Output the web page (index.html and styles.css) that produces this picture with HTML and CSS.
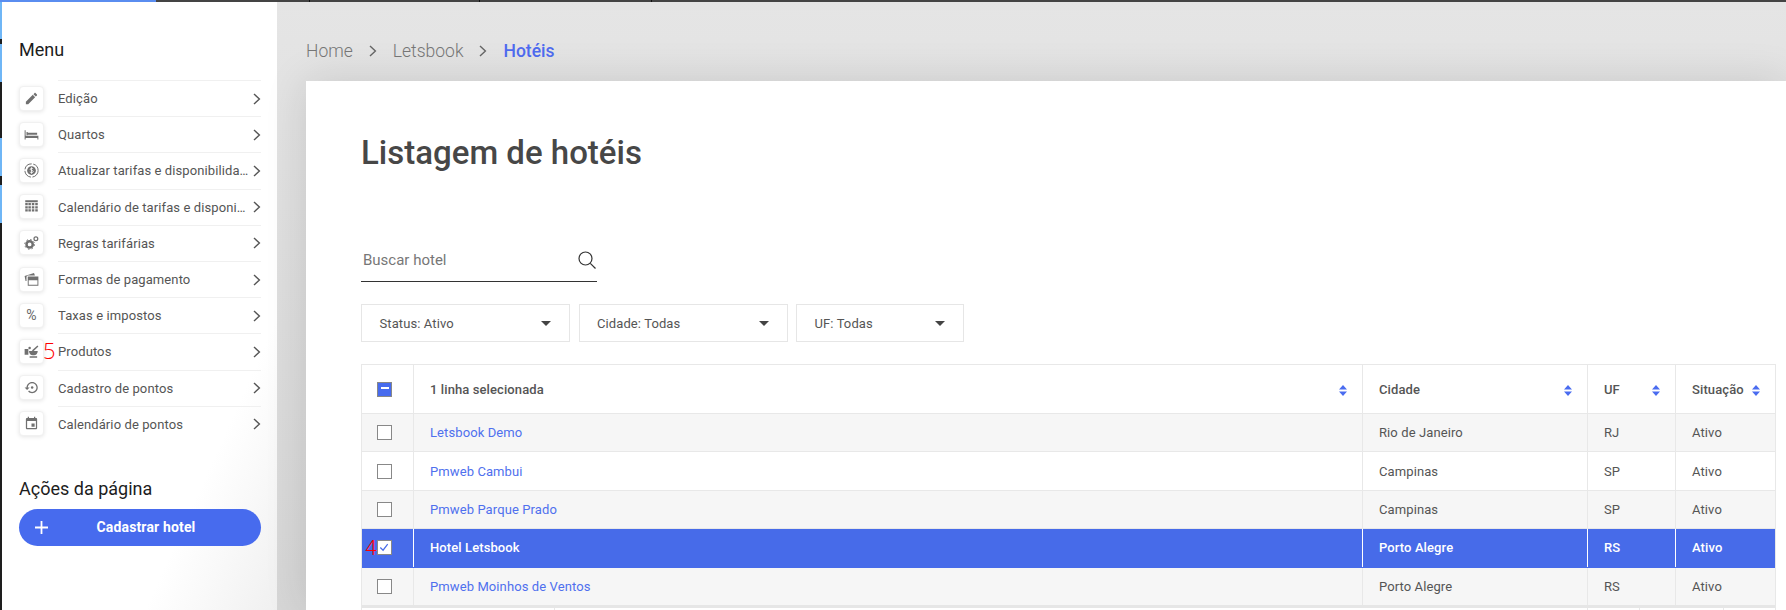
FILE: index.html
```html
<!DOCTYPE html>
<html lang="pt-BR">
<head>
<meta charset="utf-8">
<title>Listagem de hotéis</title>
<link rel="stylesheet" href="styles.css">
</head>
<body>
<svg class="sprites" width="0" height="0" aria-hidden="true">
  <symbol id="chev" viewBox="0 0 8 12"><path d="M1 1l5.4 5L1 11" fill="none" stroke="currentColor" stroke-width="1.4"/></symbol>
  <symbol id="sort" viewBox="0 0 8 11"><path d="M4 0l4 4.6H0zM4 11L0 6.4h8z" fill="#4a6cf0"/></symbol>
</svg>
<div class="topbar"><div class="topbar-progress"></div></div>
<div class="shell">
  <div class="strip"></div>
  <aside class="sidebar">
    <h2 class="side-title">Menu</h2>
    <ul class="menu">
      <li class="menu-item"><span class="ico"><svg viewBox="0 0 24 24"><path d="M3 17.25V21h3.75L17.81 9.94l-3.75-3.75L3 17.25zM20.71 7.04c.39-.39.39-1.02 0-1.41l-2.34-2.34c-.39-.39-1.02-.39-1.41 0l-1.83 1.83 3.75 3.75 1.83-1.83z"/></svg></span><span class="menu-row"><span class="menu-label">Edição</span><svg class="chev"><use href="#chev"/></svg></span></li>
      <li class="menu-item"><span class="ico"><svg viewBox="0 0 24 24"><path d="M1 5h1.600v9H23v6h-1.600v-2.600H2.600V20H1zM5 9h16v3.500H5z"/><path d="M4 8h2v5H4z"/></svg></span><span class="menu-row"><span class="menu-label">Quartos</span><svg class="chev"><use href="#chev"/></svg></span></li>
      <li class="menu-item"><span class="ico"><svg viewBox="0 0 24 24"><circle cx="12" cy="12" r="10.600" fill="none" stroke="#707070" stroke-width="1.600" stroke-dasharray="15 2.500"/><circle cx="12" cy="12" r="7"/><path d="M14.600 9.300c-.8-1-4.700-1.200-4.700.8 0 2 5 1.300 5 3.600 0 2-4.400 1.900-5.600.6M12 6.800v10.400" fill="none" stroke="#fff" stroke-width="1.300"/></svg></span><span class="menu-row"><span class="menu-label">Atualizar tarifas e disponibilida…</span><svg class="chev"><use href="#chev"/></svg></span></li>
      <li class="menu-item"><span class="ico"><svg viewBox="0 0 24 24"><path d="M2 2h20v3H2zM2 6.500h4v3.500H2zM7 6.500h4v3.500H7zM12.500 6.500h4v3.500h-4zM18 6.500h4v3.500h-4zM2 11.500h4V15H2zM7 11.500h4V15H7zM12.500 11.500h4V15h-4zM18 11.500h4V15h-4zM2 16.500h4V20H2zM7 16.500h4V20H7zM12.500 16.500h4V20h-4zM18 16.500h4V20h-4z"/></svg></span><span class="menu-row"><span class="menu-label">Calendário de tarifas e disponi…</span><svg class="chev"><use href="#chev"/></svg></span></li>
      <li class="menu-item"><span class="ico"><svg viewBox="0 0 24 24"><circle cx="9" cy="15" r="5" fill="none" stroke="#707070" stroke-width="4"/><circle cx="9" cy="15" r="7.800" fill="none" stroke="#707070" stroke-width="1.600" stroke-dasharray="2.500 3.625"/><circle cx="19" cy="6" r="3" fill="none" stroke="#707070" stroke-width="2"/></svg></span><span class="menu-row"><span class="menu-label">Regras tarifárias</span><svg class="chev"><use href="#chev"/></svg></span></li>
      <li class="menu-item"><span class="ico"><svg viewBox="0 0 24 24"><path d="M1 6.500L16 1.500l1.500 4H6.500A2.500 2.500 0 0 0 4 8v6.500H2.500z"/><path fill-rule="evenodd" d="M6 7h17v15H6zM7.500 13v7.500h14V13z"/></svg></span><span class="menu-row"><span class="menu-label">Formas de pagamento</span><svg class="chev"><use href="#chev"/></svg></span></li>
      <li class="menu-item"><span class="ico ico-text">%</span><span class="menu-row"><span class="menu-label">Taxas e impostos</span><svg class="chev"><use href="#chev"/></svg></span></li>
      <li class="menu-item"><span class="ico"><svg viewBox="0 0 24 24"><path d="M1 8h6v9H1zM8 11h14c0 4-3 7-6 7h-2c-3 0-6-3-6-7zM9 19.500h12V22H9z"/><path d="M12.500 10.500l9-8 1.500 1.500-8 7.500z"/><circle cx="9" cy="6.500" r="2"/></svg></span><span class="note note-five">5</span><span class="menu-row"><span class="menu-label">Produtos</span><svg class="chev"><use href="#chev"/></svg></span></li>
      <li class="menu-item"><span class="ico"><svg viewBox="0 0 24 24"><path d="M13 3c-4.970 0-9 4.030-9 9H1l3.890 3.890.07.140L9 12H6c0-3.870 3.130-7 7-7s7 3.130 7 7-3.130 7-7 7c-1.930 0-3.680-.790-4.940-2.060l-1.420 1.420C8.270 19.990 10.510 21 13 21c4.970 0 9-4.030 9-9s-4.030-9-9-9z"/><circle cx="13" cy="12" r="2"/></svg></span><span class="menu-row"><span class="menu-label">Cadastro de pontos</span><svg class="chev"><use href="#chev"/></svg></span></li>
      <li class="menu-item"><span class="ico"><svg viewBox="0 0 24 24"><path d="M17 12h-5v5h5v-5zM16 1v2H8V1H6v2H5c-1.110 0-1.990.9-1.990 2L3 19c0 1.100.89 2 2 2h14c1.100 0 2-.9 2-2V5c0-1.100-.9-2-2-2h-1V1h-2zm3 18H5V8h14v11z"/></svg></span><span class="menu-row"><span class="menu-label">Calendário de pontos</span><svg class="chev"><use href="#chev"/></svg></span></li>
    </ul>
    <h2 class="side-title side-title-actions">Ações da página</h2>
    <button class="cta" type="button"><svg class="cta-plus" viewBox="0 0 13 13"><path d="M6.500 0v13M0 6.500h13" stroke="#fff" stroke-width="1.800"/></svg><span>Cadastrar hotel</span></button>
  </aside>
  <main class="main">
    <nav class="crumbs">
      <span>Home</span><svg class="crumb-chev"><use href="#chev"/></svg>
      <span>Letsbook</span><svg class="crumb-chev"><use href="#chev"/></svg>
      <span class="crumb-current">Hotéis</span>
    </nav>
    <section class="card">
      <h1 class="page-title">Listagem de hotéis</h1>
      <div class="search">
        <span class="search-text">Buscar hotel</span>
        <svg class="search-icon" viewBox="0 0 18 18"><circle cx="7.500" cy="7.500" r="6.500" fill="none" stroke="#333" stroke-width="1.200"/><path d="M12.300 12.300L17.500 17.500" stroke="#333" stroke-width="1.200"/></svg>
      </div>
      <div class="filters">
        <div class="filter filter-wide"><span>Status: Ativo</span><i class="caret"></i></div>
        <div class="filter filter-wide"><span>Cidade: Todas</span><i class="caret"></i></div>
        <div class="filter filter-narrow"><span>UF: Todas</span><i class="caret"></i></div>
      </div>
      <div class="table">
        <div class="row row-head">
          <div class="cell cell-check"><span class="box box-minus"></span></div>
          <div class="cell cell-sort"><span>1 linha selecionada</span><svg class="sort"><use href="#sort"/></svg></div>
          <div class="cell cell-sort"><span>Cidade</span><svg class="sort"><use href="#sort"/></svg></div>
          <div class="cell cell-sort"><span>UF</span><svg class="sort"><use href="#sort"/></svg></div>
          <div class="cell cell-sort"><span>Situação</span><svg class="sort"><use href="#sort"/></svg></div>
        </div>
        <div class="row row-alt">
          <div class="cell cell-check"><span class="box"></span></div>
          <div class="cell"><a class="hotel-link">Letsbook Demo</a></div>
          <div class="cell">Rio de Janeiro</div><div class="cell">RJ</div><div class="cell">Ativo</div>
        </div>
        <div class="row">
          <div class="cell cell-check"><span class="box"></span></div>
          <div class="cell"><a class="hotel-link">Pmweb Cambui</a></div>
          <div class="cell">Campinas</div><div class="cell">SP</div><div class="cell">Ativo</div>
        </div>
        <div class="row row-alt">
          <div class="cell cell-check"><span class="box"></span></div>
          <div class="cell"><a class="hotel-link">Pmweb Parque Prado</a></div>
          <div class="cell">Campinas</div><div class="cell">SP</div><div class="cell">Ativo</div>
        </div>
        <div class="row row-selected">
          <div class="cell cell-check"><span class="note note-four">4</span><span class="box box-checked"><svg viewBox="0 0 13 13"><path d="M2.500 7l3 3 5-6.500" fill="none" stroke="#476be9" stroke-width="1.300"/></svg></span></div>
          <div class="cell">Hotel Letsbook</div>
          <div class="cell">Porto Alegre</div><div class="cell">RS</div><div class="cell">Ativo</div>
        </div>
        <div class="row row-alt">
          <div class="cell cell-check"><span class="box"></span></div>
          <div class="cell"><a class="hotel-link">Pmweb Moinhos de Ventos</a></div>
          <div class="cell">Porto Alegre</div><div class="cell">RS</div><div class="cell">Ativo</div>
        </div>
        <div class="table-foot">
          <div class="foot-cell foot-a"></div><div class="foot-cell foot-b"></div><div class="foot-cell foot-c"></div><div class="foot-cell foot-d"></div><div class="foot-cell foot-e"></div>
        </div>
      </div>
    </section>
  </main>
</div>
</body>
</html>
```
FILE: styles.css
```css
* { box-sizing: border-box; }
html, body { margin: 0; padding: 0; height: 610px; overflow: hidden; }
body {
  font-family: Roboto, "Liberation Sans", sans-serif;
  color: #4a4a4a;
  background: #fff;
  display: flex;
  flex-direction: column;
}
.sprites { position: absolute; }

.topbar {
  height: 2px;
  flex: none;
  background:
    linear-gradient(#111, #111) 309px 0 / 1px 2px no-repeat,
    linear-gradient(#111, #111) 479px 0 / 1px 2px no-repeat,
    linear-gradient(#111, #111) 651px 0 / 1px 2px no-repeat,
    #444;
}
.topbar-progress { width: 156px; height: 2px; background: #5a8df0; }

.shell { flex: 1; display: flex; min-height: 0; }
.strip {
  width: 2px;
  flex: none;
  background: linear-gradient(to bottom,
    #6fb6f6 0 37px, #1e1e1e 37px 42px, #6fb6f6 42px 80px, #1e1e1e 80px 136px,
    #6fb6f6 136px 174px, #1e1e1e 174px 183px, #6fb6f6 183px 221px, #1e1e1e 221px);
}

.sidebar {
  width: 275px;
  flex: none;
  padding: 0 16px 0 17px;
  background: linear-gradient(to bottom right, #fff 76%, #f0f0f0 100%);
}
.side-title {
  margin: 0;
  padding-top: 37px;
  height: 78px;
  font-size: 18px;
  line-height: 22px;
  font-weight: 400;
  color: #1d1d1d;
}
.side-title-actions { padding-top: 36px; height: 67px; }

.menu { list-style: none; margin: 0; padding: 0; }
.menu-item { position: relative; display: flex; align-items: center; height: 36.2px; }
.ico {
  width: 25px;
  height: 25px;
  flex: none;
  margin-right: 14px;
  display: flex;
  align-items: center;
  justify-content: center;
  background: #fff;
  border: 1px solid #f1f1f1;
  border-radius: 4px;
  box-shadow: 0 1px 4px rgba(0, 0, 0, .1);
}
.ico svg { width: 15px; height: 15px; fill: #707070; }
.ico-text { font-size: 14px; color: #666; }
.menu-row {
  flex: 1;
  min-width: 0;
  height: 100%;
  display: flex;
  align-items: center;
  justify-content: space-between;
  border-top: 1px solid #f0f0f0;
}
.menu-label {
  white-space: nowrap;
  font-size: 13px;
  letter-spacing: .1px;
  color: #555;
}
.chev { width: 8px; height: 12px; color: #555; flex: none; }

.note { position: absolute; color: #f00; font-weight: 300; line-height: 1; }
.note-five { left: 24px; top: 6px; font-family: "Open Sans", sans-serif; font-size: 22px; }
.note-four { left: 3px; top: 9px; font-size: 21px; }

.cta {
  width: 242px;
  height: 37px;
  position: relative;
  display: flex;
  align-items: center;
  justify-content: center;
  padding: 0 0 0 12px;
  border: 0;
  border-radius: 19px;
  background: #476bee;
  color: #fff;
  font: 700 14px Roboto, sans-serif;
  letter-spacing: .15px;
}
.cta-plus { position: absolute; left: 16px; top: 12px; width: 13px; height: 13px; }

.main {
  flex: 1;
  min-width: 0;
  padding-left: 29px;
  display: flex;
  flex-direction: column;
  background: linear-gradient(to bottom, #e5e5e5, #d6d6d6);
}
.crumbs {
  height: 79px;
  flex: none;
  padding-top: 37px;
  display: flex;
  align-items: flex-start;
  font-size: 17.5px;
  line-height: 24px;
  font-weight: 300;
  color: #777;
}
.crumb-chev { width: 8px; height: 12px; margin: 6px 16px 0; color: #666; }
.crumb-current { font-weight: 500; color: #4f6bf0; }

.card {
  flex: 1;
  min-height: 0;
  padding: 46px 10px 0 55px;
  background: #fff;
  box-shadow: 0 0 40px rgba(0, 0, 0, .12);
}
.page-title {
  margin: 0;
  height: 103px;
  font-size: 33px;
  line-height: 52px;
  font-weight: 500;
  color: #474747;
}
.search {
  width: 236px;
  height: 52px;
  padding: 9px 1px 0 2px;
  display: flex;
  align-items: center;
  justify-content: space-between;
  border-bottom: 1px solid #333;
}
.search-text { font-size: 15px; color: #777; }
.search-icon { width: 18px; height: 18px; }

.filters { display: flex; gap: 8.5px; margin-top: 22px; }
.filter {
  height: 38px;
  padding: 0 18px 0 17.5px;
  display: flex;
  align-items: center;
  justify-content: space-between;
  border: 1px solid #e6e6e6;
  font-size: 13px;
  letter-spacing: .1px;
  color: #555;
}
.filter-wide { width: 209px; }
.filter-narrow { width: 168px; }
.caret {
  width: 0;
  height: 0;
  border-left: 5px solid transparent;
  border-right: 5px solid transparent;
  border-top: 5px solid #444;
}

.table { margin-top: 22px; border: solid #e8e8e8; border-width: 1px 1px 0; }
.row {
  display: grid;
  grid-template-columns: 51px 949px 225px 88px 100px;
  height: 38.4px;
  border-bottom: 1px solid #e8e8e8;
  font-size: 13px;
  letter-spacing: .1px;
  color: #555;
}
.row-head { height: 49px; font-weight: 500; }
.row-alt { background: #f6f6f6; }
.row-selected { background: #476be9; color: #fff; font-weight: 500; border-bottom-color: #476be9; }
.cell {
  display: flex;
  align-items: center;
  padding-left: 16px;
  border-left: 1px solid #e8e8e8;
}
.cell:first-child { border-left: 0; }
.row-selected .cell { border-left-color: #fff; }
.cell-sort { justify-content: space-between; padding-right: 15px; }
.cell-check { position: relative; padding-left: 15px; }
.sort { width: 8px; height: 11px; flex: none; margin-top: 2px; }
.hotel-link { color: #4f70ee; }

.box {
  width: 15px;
  height: 15px;
  border: 1.500px solid #888;
  background: #fff;
  display: block;
}
.box svg { display: block; width: 12px; height: 12px; }
.box-minus { background: #476bee; position: relative; }
.box-minus::after {
  content: "";
  position: absolute;
  left: 2.500px;
  right: 2.500px;
  top: 4.500px;
  height: 2px;
  background: #fff;
}

.table-foot {
  display: grid;
  grid-template-columns: 192px 1033px 52px 84px 52px;
  height: 5px;
  border-top: 3px solid #e6e6e6;
  margin-top: -1px;
}
.foot-cell { border-left: 1px solid #e8e8e8; }
.foot-cell:first-child { border-left: 0; }
```
